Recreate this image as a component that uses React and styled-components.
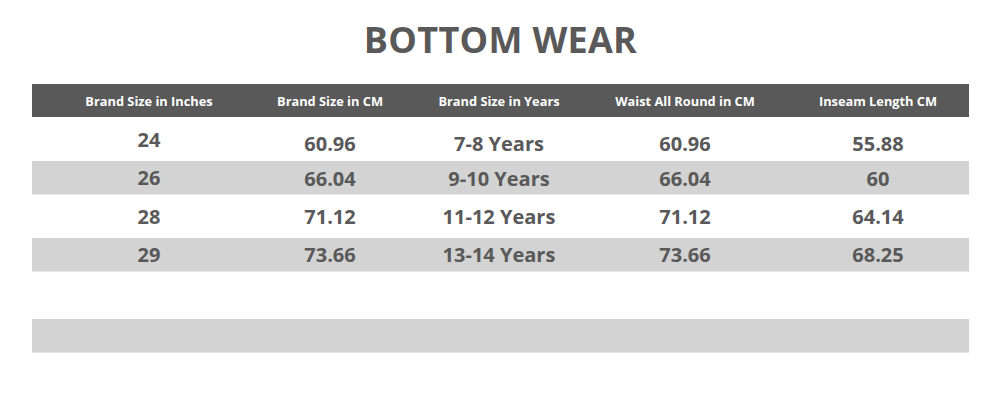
import React from 'react';
import styled, { createGlobalStyle } from 'styled-components';

const GlobalStyle = createGlobalStyle`
  html, body {
    margin: 0;
    padding: 0;
    background: #ffffff;
  }
  body {
    font-family: "Open Sans", "Liberation Sans", sans-serif;
  }
`;

const Page = styled.div`
  width: 1000px;
  height: 400px;
  box-sizing: border-box;
  padding: 17px 31px 0 32px;
  overflow: hidden;
`;

const Title = styled.h1`
  margin: 0;
  height: 67px;
  text-align: center;
  font-size: 36px;
  font-weight: 700;
  line-height: 46px;
  color: #595959;
  letter-spacing: 0.3px;
`;

const Table = styled.div`
  display: flex;
  flex-direction: column;
  width: 937px;
`;

const Row = styled.div`
  display: grid;
  grid-template-columns: 213px 170px 168px 204px 182px;
  height: ${(p) => p.$h}px;
  background: ${(p) => (p.$shade ? '#d3d3d3' : '#ffffff')};
  border-bottom: ${(p) => (p.$shade ? '1px solid #e6e6e6' : 'none')};
  box-sizing: border-box;
`;

const HeaderRow = styled(Row)`
  background: #595959;
  border-bottom: none;
`;

const HeadCell = styled.div`
  display: flex;
  align-items: center;
  justify-content: center;
  padding-left: ${(p) => (p.$first ? 21 : 0)}px;
  padding-top: 1px;
  color: #ffffff;
  font-size: 12.8px;
  font-weight: 700;
  white-space: nowrap;
`;

const Cell = styled.div`
  display: flex;
  align-items: center;
  justify-content: center;
  padding-left: ${(p) => (p.$first ? 21 : 0)}px;
  padding-top: ${(p) => p.$top || 0}px;
  box-sizing: border-box;
  color: #595959;
  font-size: 20px;
  font-weight: 700;
  white-space: nowrap;
`;

const headers = [
  'Brand Size in Inches',
  'Brand Size in CM',
  'Brand Size in Years',
  'Waist All Round in CM',
  'Inseam Length CM',
];

const rows = [
  { h: 44, shade: false, top: 8, firstTop: 0, cells: ['24', '60.96', '7-8 Years', '60.96', '55.88'] },
  { h: 34, shade: true, top: 2, firstTop: 0, cells: ['26', '66.04', '9-10 Years', '66.04', '60'] },
  { h: 43, shade: false, top: 0, firstTop: 0, cells: ['28', '71.12', '11-12 Years', '71.12', '64.14'] },
  { h: 34, shade: true, top: 0, firstTop: 0, cells: ['29', '73.66', '13-14 Years', '73.66', '68.25'] },
  { h: 47, shade: false, top: 0, firstTop: 0, cells: ['', '', '', '', ''] },
  { h: 34, shade: true, top: 0, firstTop: 0, cells: ['', '', '', '', ''] },
];

export default function App() {
  return (
    <Page>
      <GlobalStyle />
      <Title>BOTTOM WEAR</Title>
      <Table>
        <HeaderRow $h={33}>
          {headers.map((h, i) => (
            <HeadCell key={h} $first={i === 0}>{h}</HeadCell>
          ))}
        </HeaderRow>
        {rows.map((r, ri) => (
          <Row key={ri} $h={r.h} $shade={r.shade}>
            {r.cells.map((c, i) => (
              <Cell key={i} $first={i === 0} $top={i === 0 ? r.firstTop : r.top}>
                {c}
              </Cell>
            ))}
          </Row>
        ))}
      </Table>
    </Page>
  );
}
